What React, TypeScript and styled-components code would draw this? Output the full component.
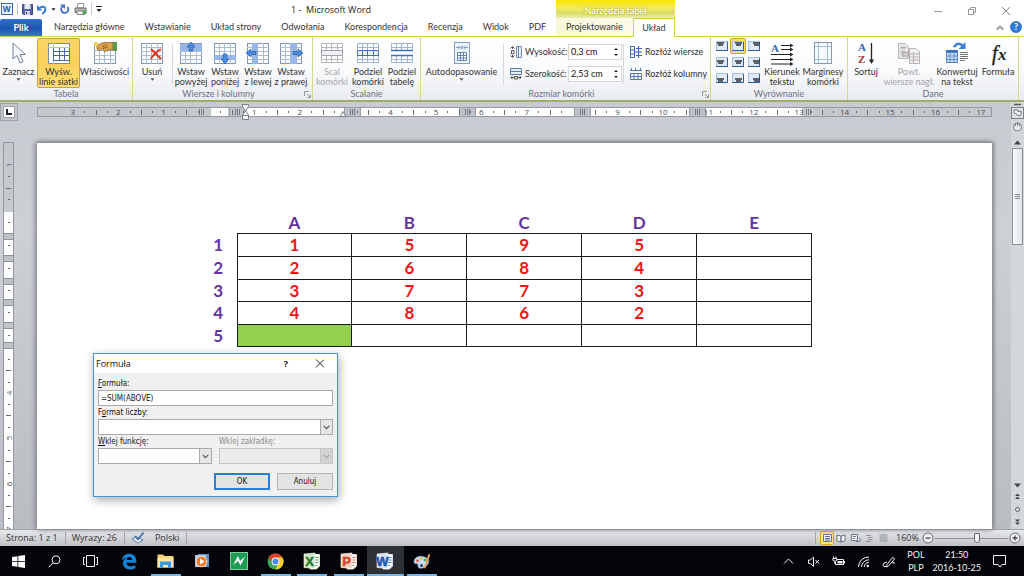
import React from "react";
import styled, { createGlobalStyle, css } from "styled-components";

const GlobalStyle = createGlobalStyle`
  * { box-sizing: border-box; }
  body { margin: 0; font-family: Lato, "Open Sans", sans-serif; font-size: 9px; line-height: 10px; color: #333; }
  button, input, select { font: inherit; color: inherit; margin: 0; padding: 0; border: 0; background: none; border-radius: 0; }
  svg { display: block; flex: none; }
`;

/* ---------- Shell ---------- */
const Shell = styled.div`
  min-height: 100vh;
  display: flex;
  flex-direction: column;
  background: #fff;
  overflow: hidden;
`;

const Header = styled.header`
  display: grid;
  grid-template-columns: 556px 119px 1fr;
  grid-template-rows: 18px 18px;
`;

const QuickBar = styled.div`
  display: flex;
  align-items: center;
`;

const QuickTools = styled.div`
  display: flex;
  align-items: center;
  width: 106px;
  height: 18px;
  gap: 4px;
  padding-left: 1px;
`;

const IconButton = styled.button`
  display: flex;
  align-items: center;
  justify-content: center;
`;

const QuickRule = styled.span`
  width: 1px;
  height: 12px;
  background: #c8c8c8;
`;

const WindowTitle = styled.h1`
  flex: 1;
  margin: 0;
  padding-top: 1px;
  font-family: "Open Sans", sans-serif;
  font-size: 9px;
  font-weight: 400;
  text-align: center;
  white-space: pre;
  color: #222;
`;

const ContextTitle = styled.div`
  display: flex;
  align-items: center;
  justify-content: center;
  padding-top: 4px;
  font-weight: 700;
  color: #fffef0;
  text-shadow: 0 0 2px #8a7d10;
  background: linear-gradient(#f9e600, #f3e95a 45%, #dbdc6f 75%, #ecedb0);
`;

const WindowControls = styled.div`
  display: flex;
  justify-content: flex-end;
  align-items: center;
  gap: 26px;
  padding: 4px 14px 0 0;
`;

const HelpTools = styled.div`
  display: flex;
  justify-content: flex-end;
  align-items: center;
  gap: 6px;
  padding-right: 2px;
`;

const TabList = styled.nav<{ $context?: boolean }>`
  display: flex;
  ${(p) =>
    p.$context &&
    css`
      background: linear-gradient(90deg, #f7f8d8, #fdfdf2);
    `}
`;

const Tab = styled.button<{ $kind?: "file" | "active" }>`
  padding: 0 10px;
  white-space: nowrap;
  ${(p) =>
    p.$kind === "file" &&
    css`
      flex: none;
      width: 42px;
      margin: 1px 2px 0 0;
      padding: 0;
      color: #fff;
      font-weight: 700;
      border-radius: 2px 2px 0 0;
      background: linear-gradient(#2f6fca, #1d55ad 55%, #3577d2);
    `}
  ${(p) =>
    p.$kind === "active" &&
    css`
      flex: 1;
      padding: 0;
      margin-bottom: -1px;
      z-index: 1;
      border: 1px solid #d0d24e;
      border-bottom: 0;
      background: #fff;
    `}
`;

/* ---------- Ribbon ---------- */
const Ribbon = styled.section`
  display: flex;
  height: 66px;
  border-top: 1px solid #d0d24e;
  border-bottom: 2px solid #a2ad68;
  background: linear-gradient(#fff, #fafbfc 50%, #e8ebef);
`;

const GroupBox = styled.div<{ $width: number }>`
  display: flex;
  flex-direction: column;
  width: ${(p) => p.$width}px;
  border-right: 1px solid #d6d88a;
`;

const GroupBody = styled.div`
  display: flex;
  height: 51px;
  padding-top: 1px;
`;

const GroupFooter = styled.div`
  display: flex;
  align-items: center;
  height: 12px;
  color: #6c7384;
`;

const GroupName = styled.span`
  flex: 1;
  text-align: center;
`;

const Tool = styled.button<{ $width: number; $on?: boolean; $dim?: boolean }>`
  display: flex;
  flex-direction: column;
  align-items: center;
  width: ${(p) => p.$width}px;
  padding-top: 3px;
  border: 1px solid transparent;
  border-radius: 2px;
  white-space: nowrap;
  ${(p) =>
    p.$dim &&
    css`
      color: #a5a7ab;
    `}
  ${(p) =>
    p.$on &&
    css`
      border-color: #c9a13c;
      background: linear-gradient(#fbd567, #fbd05c 50%, #ffe071);
    `}
`;

const ToolIcon = styled.span`
  display: flex;
  height: 22px;
  margin-bottom: 3px;
`;

const ToolLine = styled.span`
  display: flex;
  justify-content: center;
  height: 10px;
`;

const ToolRule = styled.span`
  width: 1px;
  height: 40px;
  margin: 6px 1px 0;
  background: #d4d7db;
`;

const FieldStack = styled.div`
  display: flex;
  flex-direction: column;
  gap: 6px;
  padding: 6px 0 0 5px;
`;

const SizeField = styled.label`
  display: flex;
  align-items: center;
  height: 16px;
`;

const SizeLabel = styled.span`
  width: 43px;
  margin-left: 3px;
  white-space: nowrap;
`;

const SizeBox = styled.span`
  display: flex;
  align-items: center;
  width: 54px;
  height: 16px;
  padding-right: 4px;
  border: 1px solid #d5d8dd;
  background: #fff;
`;

const SizeInput = styled.input`
  width: 44px;
  padding-left: 2px;
  color: #111;
`;

const RowTool = styled.button`
  display: flex;
  align-items: center;
  gap: 3px;
  height: 16px;
  white-space: nowrap;
`;

const AlignGrid = styled.div`
  display: grid;
  grid-template-columns: repeat(3, 16px);
  grid-auto-rows: 16px;
  padding-left: 3px;
`;

const AlignButton = styled.button<{ $on?: boolean }>`
  display: flex;
  align-items: center;
  justify-content: center;
  border: 1px solid ${(p) => (p.$on ? "#d0a52c" : "transparent")};
  border-radius: 2px;
  background: ${(p) => (p.$on ? "#fbdc6c" : "none")};
`;

/* ---------- Workspace ---------- */
const Workspace = styled.main`
  flex: 1;
  display: grid;
  grid-template-columns: 37px 1fr 19px 13px;
  grid-template-rows: 40px 1fr;
  background: linear-gradient(#c7cad0, #cdd0d5 30%, #b9bcc1);
`;

const Corner = styled.div`
  padding-top: 1px;
`;

const TabStop = styled.button`
  display: flex;
  align-items: center;
  justify-content: center;
  width: 18px;
  height: 18px;
  border: 1px solid #9b9ea5;
  background: #c3c6cc;
`;

const TabStopMark = styled.span`
  display: flex;
  align-items: center;
  justify-content: center;
  width: 12px;
  height: 12px;
  border: 1px solid #9b9ea5;
  background: #fff;
`;

const RulerTrack = styled.div`
  padding-top: 1px;
  overflow: hidden;
`;

const SideTrack = styled.div`
  position: relative;
  overflow: hidden;
`;

const SideRuler = styled.div`
  position: absolute;
  inset: 0 auto auto 3px;
`;

const Page = styled.article`
  position: relative;
  padding: 70px 180px 0 163px;
  background: #fff;
  border-top: 1px solid #8d9096;
  box-shadow: -2px 0 5px #85888e, 2px 0 4px #85888e;
`;

const Sheet = styled.table`
  width: 100%;
  height: 134px;
  table-layout: fixed;
  border-collapse: collapse;
  font-size: 17px;
  font-weight: 700;
  line-height: 20px;
  text-align: center;
  color: #f01414;
`;

const HeadCell = styled.th<{ $row?: boolean }>`
  width: ${(p) => (p.$row ? "37px" : "auto")};
  padding: 0;
  font-weight: 700;
  color: #6433a0;
`;

const Cell = styled.td<{ $fill?: boolean }>`
  padding: 0;
  border: 1px solid #1c1c1c;
  background: ${(p) => (p.$fill ? "#92d050" : "none")};
`;

const ScrollColumn = styled.div`
  grid-column: 4;
  grid-row: 1 / 3;
  display: flex;
  flex-direction: column;
  align-items: center;
  gap: 3px;
  padding-top: 1px;
  background: #d3d6da;
`;

const ScrollThumb = styled.button`
  display: flex;
  align-items: center;
  justify-content: center;
  width: 11px;
  height: 97px;
  border: 1px solid #8c929c;
  background: linear-gradient(90deg, #fbfcfd, #dfe3e8);
`;

const ScrollGap = styled.div`
  flex: 1;
`;

/* ---------- Dialog ---------- */
const Dialog = styled.form`
  position: absolute;
  top: 210px;
  left: 56px;
  width: 245px;
  border: 1px solid #4c92cc;
  background: #f0f0f0;
  box-shadow: 1px 3px 9px rgba(0, 0, 0, 0.35);
  font-family: "DejaVu Sans Condensed", "DejaVu Sans", sans-serif;
  font-size: 8px;
  color: #111;
`;

const DialogBar = styled.header`
  display: flex;
  align-items: center;
  height: 19px;
  padding: 0 13px 0 2px;
  background: #fff;
  font-family: "Open Sans", sans-serif;
  font-size: 9px;
`;

const DialogName = styled.h2`
  flex: 1;
  margin: 0;
  font-size: 9px;
  font-weight: 400;
`;

const DialogBody = styled.div`
  display: flex;
  flex-direction: column;
  padding: 5px 4px 6px;
`;

const Field = styled.label<{ $dim?: boolean }>`
  display: flex;
  flex-direction: column;
  color: ${(p) => (p.$dim ? "#8a8a8a" : "inherit")};
`;

const FieldPair = styled.div`
  display: grid;
  grid-template-columns: 114px 114px;
  justify-content: space-between;
`;

const FieldCaption = styled.span`
  line-height: 12px;
`;

const TextInput = styled.input`
  height: 16px;
  margin-bottom: 1px;
  padding: 0 2px;
  border: 1px solid #a9a9a9;
  background: #fff;
`;

const SelectBox = styled.span<{ $dim?: boolean }>`
  display: flex;
  height: 16px;
  margin-bottom: 1px;
  border: 1px solid ${(p) => (p.$dim ? "#c6c6c6" : "#a9a9a9")};
  background: ${(p) => (p.$dim ? "#ebebeb" : "#fff")};
`;

const SelectInput = styled.select`
  flex: 1;
  min-width: 0;
  appearance: none;
`;

const SelectArrow = styled.span<{ $dim?: boolean }>`
  display: flex;
  align-items: center;
  justify-content: center;
  width: 12px;
  border-left: 1px solid ${(p) => (p.$dim ? "#c6c6c6" : "#a9a9a9")};
  background: ${(p) => (p.$dim ? "#d2d2d2" : "#e6e6e6")};
`;

const DialogActions = styled.div`
  display: flex;
  justify-content: flex-end;
  gap: 7px;
  padding-top: 8px;
`;

const DialogButton = styled.button<{ $primary?: boolean }>`
  width: 56px;
  height: 17px;
  border: ${(p) => (p.$primary ? "2px solid #2a7fd0" : "1px solid #b5b5b5")};
  background: #e3e3e3;
`;

/* ---------- Status bar ---------- */
const StatusBar = styled.footer`
  display: flex;
  align-items: center;
  height: 17px;
  font-family: "Open Sans", sans-serif;
  border-top: 1px solid #9fa2a7;
  background: linear-gradient(#e6e8ea, #cfd1d4 60%, #bfc1c4);
`;

const StatusItem = styled.span`
  display: flex;
  align-items: center;
  height: 12px;
  padding: 0 7px 0 6px;
  border-right: 1px solid #a3a6aa;
`;

const StatusGap = styled.span`
  flex: 1;
  height: 12px;
  margin-right: 4px;
  border-right: 1px solid #a3a6aa;
`;

const ViewButton = styled.button<{ $on?: boolean }>`
  display: flex;
  align-items: center;
  justify-content: center;
  width: 14px;
  height: 14px;
  border: 1px solid ${(p) => (p.$on ? "#d9a520" : "transparent")};
  border-radius: 2px;
  background: ${(p) => (p.$on ? "#fce48a" : "none")};
`;

const Zoom = styled.div`
  display: flex;
  align-items: center;
  padding: 0 3px 0 6px;
`;

const ZoomValue = styled.span`
  width: 26px;
`;

const ZoomRange = styled.input`
  appearance: none;
  width: 73px;
  height: 12px;
  margin: 0 1px;
  background: linear-gradient(#8e9196, #8e9196) center / 100% 1px no-repeat;
  &::-webkit-slider-thumb {
    appearance: none;
    width: 6px;
    height: 10px;
    border: 1px solid #63676d;
    border-radius: 1px 1px 3px 3px;
    background: #f4f5f6;
  }
`;

/* ---------- Taskbar ---------- */
const Taskbar = styled.footer`
  display: flex;
  height: 30px;
  background: #03050a;
  color: #f2f2f2;
`;

const TaskItem = styled.button<{ $running?: boolean; $on?: boolean }>`
  display: flex;
  flex-direction: column;
  align-items: center;
  justify-content: center;
  width: 36px;
  background: ${(p) => (p.$on ? "#2e3237" : "none")};
  ${(p) =>
    p.$running &&
    css`
      background-image: linear-gradient(#78b4e6, #78b4e6);
      background-size: ${p.$on ? "100%" : "30px"} 2px;
      background-position: bottom center;
      background-repeat: no-repeat;
    `}
`;

const TaskApps = styled.div`
  display: flex;
  width: 329px;
  margin-left: 3px;
  & > button { flex: 1; }
`;

const Tray = styled.div`
  display: flex;
  flex: 1;
  justify-content: flex-end;
  align-items: center;
  gap: 12px;
  padding-right: 18px;
`;

const TrayClock = styled.div`
  display: flex;
  gap: 8px;
`;

const TrayText = styled.div`
  font-size: 9px;
  line-height: 13px;
  text-align: center;
  white-space: nowrap;
`;

/* ---------- Icons ---------- */
const range = (n: number) => Array.from({ length: n }, (_, i) => i);

type GridProps = { line?: string; edge?: string; children?: React.ReactNode; under?: React.ReactNode };
const GridIcon = ({ line = "#a9bcda", edge = "#8294b3", children, under }: GridProps) => (
  <svg width="24" height="22" viewBox="0 0 24 22">
    <rect x="1.5" y="1.5" width="21" height="20" fill="#fff" stroke={edge} />
    {under}
    <path d="M1 5.5H23M1 9.5H23M1 13.5H23M1 17.5H23M6.5 1V22M11.5 1V22M17.5 1V22" stroke={line} fill="none" />
    {children}
  </svg>
);

const CursorIcon = () => (
  <svg width="16" height="22" viewBox="0 0 16 22">
    <path d="M2 1V17L6 13.5L9 21L12 19.8L9 12.5H14.5Z" fill="#f6f8fb" stroke="#6e7f9e" />
  </svg>
);

const ViewGridIcon = () => (
  <svg width="24" height="22" viewBox="0 0 24 22">
    <rect x="1.5" y="1.5" width="21" height="20" fill="#fff" stroke="#7d8ba8" />
    <path d="M1 5.5H23M6.5 1V22" stroke="#b4c3dc" />
    <path d="M6.5 6V19M12.5 6V19M17.5 6V19M22.5 6V19M6 9.5H23M6 13.5H23M6 18.5H23" stroke="#4a69a5" />
  </svg>
);

const PropsIcon = () => (
  <svg width="24" height="22" viewBox="0 0 24 22">
    <rect x="1.5" y="3.5" width="21" height="18" fill="#fff" stroke="#8294b3" />
    <path d="M1 8.5H23M1 13.5H23M1 17.5H23M6.5 8V22M11.5 8V22M17.5 8V22" stroke="#a9bcda" />
    <path d="M4 4Q8 0 13 0.5L20 0V8L16 8L12 9.5Q9 9 11 6L6 8.5L4 7Z" fill="#d9a24a" stroke="#7b5524" strokeWidth=".7" />
    <path d="M9 4L14 3M10 6L15 5" stroke="#7b5524" strokeWidth=".7" />
    <rect x="20" y="0" width="4" height="9" fill="#5b9a4e" />
    <rect x="1" y="0" width="4" height="4" fill="#f1cf5b" />
  </svg>
);

const DeleteIcon = () => (
  <GridIcon>
    <path d="M11 7L21 17M21 7Q14 11 11 17" stroke="#e2331d" strokeWidth="2" fill="none" />
  </GridIcon>
);

const arrows = {
  up: "M12 0L16 5H13.8V9H10.2V5H8Z",
  down: "M12 22L16 17H13.8V12H10.2V17H8Z",
  left: "M0 11L5 7V9.5H10V12.5H5V15Z",
  right: "M24 11L19 7V9.5H14V12.5H19V15Z",
};
const bands = {
  up: "M1 2H23V9H1Z",
  down: "M1 13H23V18H1Z",
  left: "M6 1H12V22H6Z",
  right: "M12 1H18V22H12Z",
};
const InsertIcon = ({ dir }: { dir: keyof typeof arrows }) => (
  <GridIcon under={<path d={bands[dir]} fill="#a9c5f0" />}>
    <path d={bands[dir]} fill="#7ba5e5" opacity=".4" />
    <path d={arrows[dir]} fill="#4c8be0" stroke="#2a5ba6" strokeWidth=".7" />
  </GridIcon>
);

const SplitIcon = ({ kind }: { kind: "merge" | "cells" | "table" }) => {
  const tone = kind === "merge" ? "#b9b5b8" : "#9fb3d4";
  const bold = kind === "merge" ? "#a5a0a4" : "#3c6fc0";
  return (
    <svg width="24" height="22" viewBox="0 0 24 22">
      <path d="M1.5 1.5H22.5V8.5H1.5ZM1.5 13.5H22.5V20.5H1.5ZM1 5.5H23M1 17.5H23M6.5 1V9M11.5 1V9M17.5 1V9M6.5 13V21M11.5 13V21M17.5 13V21" fill="#fff" stroke={tone} />
      {kind === "table" ? (
        <path d="M1 8.5H23M1 13.5H23" stroke={bold} strokeWidth="1.5" />
      ) : (
        <path d="M1.5 8.5H22.5V13.5H1.5Z" fill="#eef1f7" stroke={bold} />
      )}
      {kind === "cells" && <path d="M6.5 8V14M11.5 8V14M17.5 8V14" stroke={bold} />}
    </svg>
  );
};

const AutoFitIcon = () => (
  <svg width="18" height="22" viewBox="0 0 18 22">
    <rect x="1.5" y=".5" width="15" height="21" fill="#f0f5fc" stroke="#7f9cc8" />
    <path d="M3 5.5H7L5 3.5M7 5.5L5 7.5M15 5.5H11L13 3.5M11 5.5L13 7.5M8 4L10 7M10 4L8 7" fill="none" stroke="#6488c2" strokeWidth=".8" />
    <path d="M4.5 10.5H13.5V18.5H4.5ZM4 13.5H14M4 16H14M7.5 10V19M10.5 10V19" fill="#fff" stroke="#5679b4" strokeWidth=".9" />
  </svg>
);

const HeightIcon = () => (
  <svg width="12" height="12" viewBox="0 0 12 12">
    <path d="M2.5 1V3M2.5 9V11M.5 2.5L2.5 .5L4.5 2.5M.5 9.5L2.5 11.5L4.5 9.5M1.5 4.5H4V8H1.5Z" fill="none" stroke="#444" strokeWidth=".9" />
    <path d="M6.5 .5H11.5V11.5H6.5ZM8.5 .5V11.5" fill="#e6eefa" stroke="#7189b3" />
  </svg>
);
const WidthIcon = () => (
  <svg width="12" height="12" viewBox="0 0 12 12">
    <path d="M.5 .5H11.5V6.5H.5ZM0 3.5H12" fill="#e6eefa" stroke="#5e7cb0" />
    <path d="M1 9.5H4M8 9.5H11M2.5 8L.7 9.5L2.5 11M9.5 8L11.3 9.5L9.5 11M4.5 8.5H7.5V11H4.5Z" fill="none" stroke="#444" strokeWidth=".9" />
  </svg>
);
const RowsIcon = () => (
  <svg width="12" height="12" viewBox="0 0 12 12">
    <path d="M.5 .5H4.5V11.5H.5ZM0 4H5M0 8H5M8.5 0V12M6 2.5H12M5 6H12M6 9.5H12" fill="none" stroke="#3f65ac" />
  </svg>
);
const ColumnsIcon = () => (
  <svg width="12" height="12" viewBox="0 0 12 12">
    <path d="M1.5 0V3M5.5 0V3M10.5 0V3M0 2.5H12M.5 5.5H11.5V11.5H.5ZM4 5V12M8 5V12M0 8.5H12" fill="none" stroke="#5a79b2" />
  </svg>
);

const AlignIcon = ({ col, row }: { col: number; row: number }) => (
  <svg width="12" height="10" viewBox="0 0 12 10">
    <rect x=".5" y=".5" width="11" height="9" fill="#dfe9f7" stroke="#a6bedf" />
    <path d="M0 9.5H11.5V1" fill="none" stroke="#2f5da6" />
    <g transform={`translate(${col * 2 + 1} ${row * 2})`}>
      <path d="M0 2H7M1 4H6" stroke="#30343c" strokeWidth="1.3" />
    </g>
  </svg>
);

const TextDirIcon = () => (
  <svg width="24" height="24" viewBox="0 0 24 24">
    <text x="1" y="10" fontFamily="Liberation Serif" fontWeight="700" fontSize="11" fill="#3867b5">A</text>
    <path d="M11 3.5H20M11 7.5H20M1 12.5H20M1 17.5H20M1 22H20" stroke="#222" />
    <path d="M20 1.5L23.5 3.5L20 5.5ZM20 5.5L23.5 7.5L20 9.5ZM20 10.5L23.5 12.5L20 14.5ZM20 15.5L23.5 17.5L20 19.5ZM20 20L23.5 22L20 24Z" fill="#222" />
  </svg>
);
const MarginsIcon = () => (
  <svg width="20" height="22" viewBox="0 0 20 22">
    <rect x="1.5" y=".5" width="17" height="21" fill="#f6fafd" stroke="#8a97a9" />
    <path d="M5.5 1V21M14.5 1V21M2 4.5H18M2 17.5H18" stroke="#9cc0dd" />
  </svg>
);
const SortIcon = () => (
  <svg width="18" height="24" viewBox="0 0 18 24">
    <text x="1" y="9" fontFamily="Liberation Serif" fontWeight="700" fontSize="11" fill="#3263b5">A</text>
    <text x="1" y="21" fontFamily="Liberation Serif" fontWeight="700" fontSize="11" fill="#a83232">Z</text>
    <path d="M14.5 1V20" stroke="#222" strokeWidth="1.3" />
    <path d="M12 17.5L14.5 22L17 17.5Z" fill="#222" />
  </svg>
);
const RepeatIcon = () => (
  <svg width="24" height="22" viewBox="0 0 24 22">
    <path d="M1.5 1.5H8L11.5 5V16.5H1.5ZM3 6H8M3 9H8M3 12H8" fill="#eceaec" stroke="#b8b4b8" />
    <path d="M12.5 6.5H19L22.5 10V21.5H12.5ZM12.5 12H22M12.5 15H22M12.5 18H22M16.5 10V21" fill="#f2f0f2" stroke="#b8b4b8" />
    <path d="M4 5.5H9M5.5 10.5H11V14H5.5Z" fill="none" stroke="#b0acb0" strokeWidth="1.5" />
  </svg>
);
const ConvertIcon = () => (
  <svg width="24" height="22" viewBox="0 0 24 22">
    <path d="M9 5Q13 -1 18 4" fill="none" stroke="#3b7fdd" strokeWidth="2.5" />
    <path d="M20.5 0V7H13.5Z" fill="#3b7fdd" />
    <path d="M1.5 8.5H12.5V20.5H1.5Z" fill="#c5daf6" stroke="#5683cb" />
    <path d="M1.5 9.5H12.5" stroke="#3368bb" strokeWidth="2.5" />
    <path d="M1 14H13M1 17.5H13M5 9V20M9 9V20" stroke="#5683cb" strokeWidth=".8" />
    <path d="M15 10.5H23M15 12.5H23M15 14.5H23M15 16.5H23M15 18.5H20" stroke="#555" strokeWidth=".8" />
  </svg>
);
const FxIcon = () => (
  <svg width="22" height="24" viewBox="0 0 22 24">
    <text x="5" y="18" fontFamily="Liberation Serif" fontStyle="italic" fontSize="20" fill="#222" stroke="#222" strokeWidth=".4">f</text>
    <text x="11" y="18" fontFamily="Liberation Serif" fontStyle="italic" fontWeight="700" fontSize="17" fill="#222">x</text>
  </svg>
);

const Caret = ({ size = 5, color = "#555" }: { size?: number; color?: string }) => (
  <svg width={size} height={size} viewBox="0 0 6 6">
    <path d="M.5 1.5H5.5L3 4.5Z" fill={color} />
  </svg>
);
const Launcher = () => (
  <svg width="8" height="7" viewBox="0 0 8 7">
    <path d="M.5 5V.5H5M3 3L6 6M6.5 3.5V6.5H3.5" fill="none" stroke="#888d97" strokeWidth=".9" />
  </svg>
);
const Spinner = () => (
  <svg width="6" height="10" viewBox="0 0 6 10">
    <path d="M1 3L3 1L5 3ZM1 7L3 9L5 7Z" fill="#222" />
  </svg>
);
const Chevron = ({ color = "#555" }: { color?: string }) => (
  <svg width="7" height="5" viewBox="0 0 7 5">
    <path d="M.7 .8L3.5 3.7L6.3 .8" fill="none" stroke={color} strokeWidth="1.1" />
  </svg>
);

const WordMark = ({ size }: { size: number }) => (
  <svg width={size} height={size} viewBox="0 0 13 13">
    <rect x=".5" y=".5" width="12" height="12" fill="#fff" stroke="#2b5fae" />
    <rect x="1.5" y="1.5" width="9" height="10" fill="#e5eefb" />
    <text x="2" y="10" fontFamily="Liberation Sans" fontWeight="700" fontSize="9" fill="#2357a8">W</text>
  </svg>
);
const SaveIcon = () => (
  <svg width="11" height="11" viewBox="0 0 11 11">
    <path d="M.5 .5H10.5V10.5H1.5L.5 9.5Z" fill="#5a61ae" stroke="#3c4388" />
    <rect x="2.5" y="0" width="6" height="5" fill="#e9ecf7" />
    <rect x="3" y="7" width="5" height="4" fill="#cdd1e6" />
    <rect x="4" y="8" width="1" height="2" fill="#333a7c" />
  </svg>
);
const UndoIcon = () => (
  <svg width="10" height="11" viewBox="0 0 10 11">
    <path d="M2 4Q8 1 8.5 5Q8.5 8 5 10" fill="none" stroke="#3d7bcc" strokeWidth="1.9" />
    <path d="M0 1V6.5H5.5Z" fill="#3d7bcc" />
  </svg>
);
const RedoIcon = () => (
  <svg width="10" height="11" viewBox="0 0 10 11">
    <path d="M2.5 2.5A3.6 3.6 0 1 0 7.5 3" fill="none" stroke="#3d6fd0" strokeWidth="1.8" />
    <path d="M0 .5H5V5Z" fill="#3d6fd0" />
  </svg>
);
const PrintIcon = () => (
  <svg width="13" height="12" viewBox="0 0 13 12">
    <path d="M4 .5H10L9 5H3Z" fill="#fff" stroke="#777" strokeWidth=".8" />
    <path d="M1 5H12V9.5H1Z" fill="#b3b8b3" stroke="#555" strokeWidth=".8" />
    <path d="M3 8H10V11.5H3Z" fill="#f4f4f4" stroke="#666" strokeWidth=".8" />
    <circle cx="10.5" cy="9.5" r="2" fill="#4f9c4c" />
  </svg>
);

/* ---------- Rulers ---------- */
const CM = 45.4;
const tickKinds = range(4).slice(1);

const HorizontalRuler = () => {
  const zero = 172;
  return (
    <svg width="955" height="17">
      <rect x=".5" y="4.5" width="954" height="9" fill="#c5c8cd" stroke="#93979f" />
      <rect x="174" y="5" width="17" height="8" fill="#fff" />
      <rect x="209" y="5" width="556" height="8" fill="#fff" />
      {[192, 307, 422, 537, 652].map((x) => (
        <rect key={x} x={x + 0.5} y="4.5" width="16" height="9" fill="#bfc2c8" stroke="#9a9da5" />
      ))}
      {[162, 198, 313, 428, 543, 658, 769].map((x) => (
        <path key={x} d={`M${x + 0.5} 6V12M${x + 2.5} 6V12M${x + 4.5} 6V12`} stroke="#777b82" />
      ))}
      {range(21).map((i) => {
        const cm = i - 3;
        const x = zero + cm * CM;
        return (
          <g key={cm}>
            {cm !== 0 && cm !== 3 && cm !== 8 && (
              <text x={x} y="12" textAnchor="middle" fontFamily="Open Sans" fontSize="8" fill="#4a4d52">
                {Math.abs(cm)}
              </text>
            )}
            {cm < 17 &&
              tickKinds.map((q) => {
                const tx = Math.round(x + (q * CM) / 4);
                return <rect key={q} x={tx} y={q === 2 ? 7 : 8} width="1" height={q === 2 ? 5 : 2} fill="#6a6d73" />;
              })}
          </g>
        );
      })}
      <path d="M205 1.5H211.5V3.5L208.5 8L211.5 12V16.5H205.5V12L208.5 8L205.5 3.5V1.5M205.5 12.5H211.5" fill="#f3f4f5" stroke="#73777e" strokeWidth=".9" />
      <path d="M303 13.5L306 8.5L309 13.5Z" fill="#f3f4f5" stroke="#73777e" strokeWidth=".9" />
    </svg>
  );
};

const VerticalRuler = () => (
  <svg width="12" height="400">
    <rect x=".5" y=".5" width="10" height="399" fill="#fff" stroke="#93979f" />
    <rect x="1" y="1" width="9" height="69" fill="#c5c8cd" />
    {[91, 113, 136, 157, 180, 200].map((y) => (
      <rect key={y} x=".5" y={y + 0.5} width="10" height="6" fill="#bfc2c8" stroke="#8f939a" />
    ))}
    {[
      [1, 23],
      [4, 251],
      [5, 296],
      [6, 342],
      [7, 387],
    ].map(([n, y]) => (
      <text key={n} x={-y} y="9" transform="rotate(-90)" textAnchor="middle" fontFamily="Open Sans" fontSize="8" fill="#4a4d52">
        {n}
      </text>
    ))}
    {[39, 62, 85, 108, 131, 153, 175, 198, 222, 245, 267, 290, 313, 336, 358, 381].map((y) => (
      <rect key={y} x="5" y={y - 5} width="2" height="1" fill="#6a6d73" />
    ))}
    {[46, 228, 273, 319, 364].map((y) => (
      <rect key={y} x="3" y={y} width="5" height="1" fill="#6a6d73" />
    ))}
  </svg>
);

/* ---------- Taskbar icons ---------- */
const OfficeIcon = ({ letter, color, tint }: { letter: string; color: string; tint: string }) => (
  <svg width="18" height="18" viewBox="0 0 18 18">
    <path d="M7 2.5H16.5V14L13.5 17H7Z" fill="#fff" stroke={tint} />
    <path d="M12 5.5H15.5M12 8H15.5M12 10.5H15.5M9 13.5H14" stroke={color} strokeWidth=".8" />
    <path d="M1 2L12 1V16.5L1 15.5Z" fill={tint} stroke="#fff" strokeWidth=".6" />
    <text x="6.5" y="13.5" textAnchor="middle" fontFamily="Liberation Sans" fontWeight="700" fontSize="13" fill={color} stroke={color} strokeWidth=".5">
      {letter}
    </text>
  </svg>
);

type App = { name: string; icon: React.ReactNode; running?: boolean; on?: boolean };
const apps: App[] = [
  {
    name: "Edge",
    icon: (
      <svg width="16" height="17" viewBox="0 0 16 17">
        <path d="M.8 7.5C1.5 2.8 4.5 .8 8.2 .8C13 .8 15.3 4 15.3 8V9.8H5.3C5.4 12.3 7.5 13.3 9.8 13.3C11.5 13.3 13 12.9 14.3 12.1V15.3C12.8 16.1 11 16.5 9 16.5C4.8 16.5 2 14 2 10.3C2 8 3.3 5.8 5.5 4.7C3.5 4.9 1.9 6 .8 7.5ZM5.4 7H11C11 5 10.2 3.9 8.4 3.9C6.8 3.9 5.7 5.1 5.4 7Z" fill="#1583dc" />
      </svg>
    ),
  },
  {
    name: "Eksplorator plików",
    running: true,
    icon: (
      <svg width="17" height="16" viewBox="0 0 17 16">
        <path d="M.5 1.5H6L7.5 3H16.5V14.5H.5Z" fill="#f3d373" />
        <path d="M.5 5H16.5V14.5H.5Z" fill="#fbe7a0" />
        <path d="M3 8.5H14V15H11V12H6V15H3Z" fill="#3a9bd8" />
      </svg>
    ),
  },
  {
    name: "Odtwarzacz",
    icon: (
      <svg width="16" height="16" viewBox="0 0 16 16">
        <rect x="4" y="1" width="11" height="13" fill="#5b93c8" />
        <rect x="1" y="2" width="11" height="12" fill="#a9cbe8" />
        <circle cx="7.5" cy="8.5" r="5.3" fill="#ee7a23" stroke="#fbe0c8" />
        <path d="M6 5.5L10.5 8.5L6 11.5Z" fill="#fff" />
      </svg>
    ),
  },
  {
    name: "Monitor",
    icon: (
      <svg width="18" height="18" viewBox="0 0 18 18">
        <rect x=".5" y=".5" width="17" height="17" fill="#1c9c52" stroke="#7ecb9c" />
        <path d="M3 13L8 4L10 9L15 4.5L10.5 13.5L8 9Z" fill="#fff" />
      </svg>
    ),
  },
  {
    name: "Chrome",
    running: true,
    icon: (
      <svg width="17" height="17" viewBox="0 0 17 17">
        <circle cx="8.5" cy="8.5" r="8" fill="#3aa757" />
        <path d="M1.57 4.5A8 8 0 0 1 15.43 4.5L8.5 8.5L5.5 10.5Z" fill="#e2402f" />
        <path d="M15.43 4.5A8 8 0 0 1 8.5 16.5L11.5 10.5L8.5 4.5Z" fill="#fccb2f" />
        <circle cx="8.5" cy="8.5" r="3.9" fill="#fff" />
        <circle cx="8.5" cy="8.5" r="3" fill="#4687ee" />
      </svg>
    ),
  },
  { name: "Excel", running: true, icon: <OfficeIcon letter="X" color="#2c7a34" tint="#cfe8c8" /> },
  { name: "PowerPoint", running: true, icon: <OfficeIcon letter="P" color="#d24a22" tint="#f9d3c3" /> },
  { name: "Word", running: true, on: true, icon: <OfficeIcon letter="W" color="#2256aa" tint="#d3e2f6" /> },
  {
    name: "Paint",
    running: true,
    icon: (
      <svg width="18" height="18" viewBox="0 0 18 18">
        <path d="M1 10C1 5 6 3.5 10 4.5C15 5.5 17 9 15 12C13 15.5 9 17 6 16C4 15 6 13 4.5 12C3 11.5 1 12 1 10Z" fill="#c8dcee" stroke="#7798b8" strokeWidth=".7" />
        <circle cx="4.5" cy="8.8" r="1.3" fill="#e04a35" />
        <circle cx="8" cy="6.8" r="1.3" fill="#f0c332" />
        <circle cx="12" cy="8" r="1.3" fill="#49a64a" />
        <circle cx="8.5" cy="13.5" r="1.5" fill="#223a78" />
        <path d="M11 16L15 3Q17 0 17 4L12.5 16.5Z" fill="#d99b52" />
      </svg>
    ),
  },
];

const stroke = { fill: "none", stroke: "#f2f2f2", strokeWidth: 1 };
const trayIcons: [string, React.ReactNode][] = [
  ["Pokaż ukryte ikony", <path d="M2 8.5L6.5 4L11 8.5" {...stroke} />],
  [
    "Głośność",
    <>
      <path d="M1.5 5V8.5H3.5L6.5 11.5V2L3.5 5Z" {...stroke} />
      <path d="M8.5 5L12 8.5M12 5L8.5 8.5" {...stroke} />
    </>,
  ],
  [
    "Bateria",
    <>
      <path d="M5 4.5H11.5V9.5H3.5V7" {...stroke} />
      <path d="M5.5 6H10.5V8.5H5.5Z" fill="#f2f2f2" />
      <path d="M12.5 6V8.5M1.5 1.5V3.5M4 1.5V3.5M.8 3.5H4.8V5.5Q3 7 1 5.5ZM2.8 6V9" {...stroke} />
    </>,
  ],
  [
    "Sieć",
    <>
      <path d="M1.5 12A10 10 0 0 1 12 2M4.5 12A7.5 7.5 0 0 1 12 4.8M7.2 12A5 5 0 0 1 12 7.5" {...stroke} />
      <circle cx="10.8" cy="11" r="1.2" fill="#f2f2f2" />
    </>,
  ],
  [
    "Obszar roboczy pisma",
    <path d="M12.5 4L10 7L6 11.5L4.5 11.8L4.8 10L9.5 3.5Q11.5 1 12.5 4M5 7Q1 7.5 1 10Q1.5 12.5 4.5 11.5M10 7Q13 7 12 9" {...stroke} />,
  ],
];

/* ---------- Content ---------- */
const mainTabs = ["Narzędzia główne", "Wstawianie", "Układ strony", "Odwołania", "Korespondencja", "Recenzja", "Widok", "PDF"];
const columns = ["A", "B", "C", "D", "E"];
const rows = [
  ["1", "5", "9", "5", ""],
  ["2", "6", "8", "4", ""],
  ["3", "7", "7", "3", ""],
  ["4", "8", "6", "2", ""],
  ["", "", "", "", ""],
];

type ToolButtonProps = { icon: React.ReactNode; lines: string[]; width: number; on?: boolean; dim?: boolean; menu?: boolean };
const ToolButton = ({ icon, lines, width, on, dim, menu }: ToolButtonProps) => (
  <Tool type="button" $width={width} $on={on} $dim={dim} disabled={dim}>
    <ToolIcon>{icon}</ToolIcon>
    {lines.map((l) => (
      <ToolLine key={l}>{l}</ToolLine>
    ))}
    {menu && (
      <ToolLine>
        <Caret />
      </ToolLine>
    )}
  </Tool>
);

const Group = ({ name, width, launcher, children }: { name: string; width: number; launcher?: boolean; children: React.ReactNode }) => (
  <GroupBox $width={width}>
    <GroupBody>{children}</GroupBody>
    <GroupFooter>
      <GroupName>{name}</GroupName>
      {launcher && (
        <IconButton aria-label={name}>
          <Launcher />
        </IconButton>
      )}
    </GroupFooter>
  </GroupBox>
);

const FormulaDialog = () => (
  <Dialog aria-label="Formuła">
    <DialogBar>
      <DialogName>Formuła</DialogName>
      <IconButton type="button" aria-label="Pomoc">
        <b>?</b>
      </IconButton>
      <IconButton type="button" aria-label="Zamknij">
        <svg width="36" height="9" viewBox="0 0 36 9">
          <path d="M28 .5L36 8.5M36 .5L28 8.5" stroke="#222" />
        </svg>
      </IconButton>
    </DialogBar>
    <DialogBody>
      <Field>
        <FieldCaption>
          <u>F</u>ormuła:
        </FieldCaption>
        <TextInput defaultValue="=SUM(ABOVE)" />
      </Field>
      <Field>
        <FieldCaption>
          F<u>o</u>rmat liczby:
        </FieldCaption>
        <SelectBox>
          <SelectInput />
          <SelectArrow>
            <Chevron />
          </SelectArrow>
        </SelectBox>
      </Field>
      <FieldPair>
        <Field>
          <FieldCaption>
            <u>W</u>klej funkcję:
          </FieldCaption>
          <SelectBox>
            <SelectInput />
            <SelectArrow>
              <Chevron />
            </SelectArrow>
          </SelectBox>
        </Field>
        <Field $dim>
          <FieldCaption>Wklej zakładkę:</FieldCaption>
          <SelectBox $dim>
            <SelectInput disabled />
            <SelectArrow $dim>
              <Chevron color="#a5a5a5" />
            </SelectArrow>
          </SelectBox>
        </Field>
      </FieldPair>
      <DialogActions>
        <DialogButton type="button" $primary>
          OK
        </DialogButton>
        <DialogButton type="button">Anuluj</DialogButton>
      </DialogActions>
    </DialogBody>
  </Dialog>
);

export default function App() {
  return (
    <Shell>
      <GlobalStyle />
      <Header>
        <QuickBar>
          <QuickTools>
            <WordMark size={12} />
            <QuickRule />
            <IconButton aria-label="Zapisz">
              <SaveIcon />
            </IconButton>
            <IconButton aria-label="Cofnij">
              <UndoIcon />
            </IconButton>
            <Caret color="#222" />
            <IconButton aria-label="Ponów">
              <RedoIcon />
            </IconButton>
            <IconButton aria-label="Drukuj">
              <PrintIcon />
            </IconButton>
            <QuickRule />
            <svg width="6" height="8" viewBox="0 0 6 8">
              <path d="M0 1.5H6" stroke="#222" />
              <path d="M.5 4H5.5L3 7Z" fill="#222" />
            </svg>
          </QuickTools>
          <WindowTitle>{"1 -  Microsoft Word"}</WindowTitle>
        </QuickBar>
        <ContextTitle>Narzędzia tabel</ContextTitle>
        <WindowControls>
          <IconButton aria-label="Minimalizuj">
            <svg width="8" height="8">
              <path d="M0 4.5H8" stroke="#999" />
            </svg>
          </IconButton>
          <IconButton aria-label="Przywróć">
            <svg width="8" height="8">
              <path d="M.5 2.5H5.5V7.5H.5ZM2.5 2V.5H7.5V5.5H6" fill="none" stroke="#999" />
            </svg>
          </IconButton>
          <IconButton aria-label="Zamknij">
            <svg width="8" height="8">
              <path d="M0 0L8 8M8 0L0 8" stroke="#888" />
            </svg>
          </IconButton>
        </WindowControls>
        <TabList>
          <Tab $kind="file">Plik</Tab>
          {mainTabs.map((t) => (
            <Tab key={t}>{t}</Tab>
          ))}
        </TabList>
        <TabList $context>
          <Tab>Projektowanie</Tab>
          <Tab $kind="active">Układ</Tab>
        </TabList>
        <HelpTools>
          <IconButton aria-label="Minimalizuj wstążkę">
            <svg width="8" height="6">
              <path d="M1 4.5L4 1.5L7 4.5V5.5L4 3.5L1 5.5Z" fill="#fff" stroke="#555" strokeWidth=".8" />
            </svg>
          </IconButton>
          <IconButton aria-label="Pomoc">
            <svg width="12" height="12" viewBox="0 0 12 12">
              <circle cx="6" cy="6" r="5.6" fill="#2f7ad6" stroke="#1d5bb0" strokeWidth=".6" />
              <text x="6" y="9" textAnchor="middle" fontWeight="700" fontSize="9" fill="#fff">?</text>
            </svg>
          </IconButton>
        </HelpTools>
      </Header>

      <Ribbon>
        <Group name="Tabela" width={133}>
          <ToolButton width={37} icon={<CursorIcon />} lines={["Zaznacz"]} menu />
          <ToolButton width={43} icon={<ViewGridIcon />} lines={["Wyśw.", "linie siatki"]} on />
          <ToolButton width={49} icon={<PropsIcon />} lines={["Właściwości"]} />
        </Group>
        <Group name="Wiersze i kolumny" width={180} launcher>
          <ToolButton width={38} icon={<DeleteIcon />} lines={["Usuń"]} menu />
          <ToolRule />
          <ToolButton width={34} icon={<InsertIcon dir="up" />} lines={["Wstaw", "powyżej"]} />
          <ToolButton width={34} icon={<InsertIcon dir="down" />} lines={["Wstaw", "poniżej"]} />
          <ToolButton width={32} icon={<InsertIcon dir="left" />} lines={["Wstaw", "z lewej"]} />
          <ToolButton width={34} icon={<InsertIcon dir="right" />} lines={["Wstaw", "z prawej"]} />
        </Group>
        <Group name="Scalanie" width={108}>
          <ToolButton width={38} icon={<SplitIcon kind="merge" />} lines={["Scal", "komórki"]} dim />
          <ToolButton width={34} icon={<SplitIcon kind="cells" />} lines={["Podziel", "komórki"]} />
          <ToolButton width={34} icon={<SplitIcon kind="table" />} lines={["Podziel", "tabelę"]} />
        </Group>
        <Group name="Rozmiar komórki" width={290} launcher>
          <ToolButton width={81} icon={<AutoFitIcon />} lines={["Autodopasowanie"]} menu />
          <ToolRule />
          <FieldStack>
            <SizeField>
              <HeightIcon />
              <SizeLabel>Wysokość:</SizeLabel>
              <SizeBox>
                <SizeInput defaultValue="0,3 cm" />
                <Spinner />
              </SizeBox>
            </SizeField>
            <SizeField>
              <WidthIcon />
              <SizeLabel>Szerokość:</SizeLabel>
              <SizeBox>
                <SizeInput defaultValue="2,53 cm" />
                <Spinner />
              </SizeBox>
            </SizeField>
          </FieldStack>
          <ToolRule />
          <FieldStack>
            <RowTool>
              <RowsIcon />
              Rozłóż wiersze
            </RowTool>
            <RowTool>
              <ColumnsIcon />
              Rozłóż kolumny
            </RowTool>
          </FieldStack>
        </Group>
        <Group name="Wyrównanie" width={137}>
          <AlignGrid>
            {range(9).map((i) => (
              <AlignButton key={i} $on={i === 1} aria-label={`Wyrównanie ${i + 1}`}>
                <AlignIcon col={i % 3} row={Math.floor(i / 3)} />
              </AlignButton>
            ))}
          </AlignGrid>
          <ToolButton width={40} icon={<TextDirIcon />} lines={["Kierunek", "tekstu"]} />
          <ToolButton width={42} icon={<MarginsIcon />} lines={["Marginesy", "komórki"]} />
        </Group>
        <Group name="Dane" width={171}>
          <ToolButton width={36} icon={<SortIcon />} lines={["Sortuj"]} />
          <ToolButton width={50} icon={<RepeatIcon />} lines={["Powt.", "wiersze nagł."]} dim />
          <ToolButton width={46} icon={<ConvertIcon />} lines={["Konwertuj", "na tekst"]} />
          <ToolButton width={36} icon={<FxIcon />} lines={["Formuła"]} />
        </Group>
      </Ribbon>

      <Workspace>
        <Corner>
          <TabStop aria-label="Tabulator">
            <TabStopMark>
              <svg width="6" height="6">
                <path d="M1 0V5H6" fill="none" stroke="#222" strokeWidth="2" />
              </svg>
            </TabStopMark>
          </TabStop>
        </Corner>
        <RulerTrack>
          <HorizontalRuler />
        </RulerTrack>
        <span />
        <ScrollColumn>
          <svg width="13" height="34" viewBox="0 0 13 34">
            <path d="M3 1.5H10" stroke="#555" strokeWidth="1.5" />
            <rect x=".5" y="4.5" width="12" height="11" fill="#dfe2e6" stroke="#7b8088" />
            <path d="M3 7H7V9L10 8V12L7 13L6 11L3 10Z" fill="#fff" stroke="#555" strokeWidth=".8" />
            <circle cx="6.5" cy="24" r="4" fill="#e8eaec" stroke="#82868c" />
            <path d="M4.5 20V23M6.5 19V23M8.5 20V23" stroke="#82868c" />
          </svg>
          <svg width="7" height="5">
            <path d="M0 4.5L3.5 .5L7 4.5Z" fill="#444" />
          </svg>
          <ScrollThumb aria-label="Przewiń">
            <svg width="5" height="6">
              <path d="M0 .5H5M0 2.5H5M0 4.5H5" stroke="#858a92" />
            </svg>
          </ScrollThumb>
          <ScrollGap />
          <svg width="9" height="48" viewBox="0 0 9 48">
            <path d="M1 2.5H8L4.5 6.5Z" fill="#444" />
            <path d="M2 18L4.5 15.5L7 18ZM2 15L4.5 12.5L7 15Z" fill="#444" />
            <path d="M2 38.5L4.5 41L7 38.5ZM2 41.5L4.5 44L7 41.5Z" fill="#444" />
            <circle cx="4.5" cy="28.5" r="2" fill="#eee" stroke="#555" />
          </svg>
        </ScrollColumn>
        <SideTrack>
          <SideRuler>
            <VerticalRuler />
          </SideRuler>
        </SideTrack>
        <Page>
          <Sheet>
            <thead>
              <tr>
                <HeadCell as="td" $row />
                {columns.map((c) => (
                  <HeadCell key={c} scope="col">
                    {c}
                  </HeadCell>
                ))}
              </tr>
            </thead>
            <tbody>
              {rows.map((row, r) => (
                <tr key={r}>
                  <HeadCell scope="row" $row>
                    {r + 1}
                  </HeadCell>
                  {row.map((v, c) => (
                    <Cell key={c} $fill={r === 4 && c === 0}>
                      {v}
                    </Cell>
                  ))}
                </tr>
              ))}
            </tbody>
          </Sheet>
          <FormulaDialog />
        </Page>
      </Workspace>

      <StatusBar>
        <StatusItem>Strona: 1 z 1</StatusItem>
        <StatusItem>Wyrazy: 26</StatusItem>
        <StatusItem>
          <svg width="24" height="12" viewBox="0 0 24 12">
            <path d="M1 7L5 5L12 8L7 11Z" fill="#fff" stroke="#5878b5" />
            <path d="M4 4L7 7.5L12.5 .5" fill="none" stroke="#3f68b8" strokeWidth="1.6" />
          </svg>
          Polski
        </StatusItem>
        <StatusGap />
        {[
          "M1.5 1.5H9.5V8.5H1.5ZM3 3.5H8M3 5.5H8M3 7H8",
          "M1 2L5 3V9L1 8ZM9 2L5 3V9L9 8Z",
          "M1.5 1.5H7.5V7.5H1.5ZM3 3.5H6M3 5.5H5M6 8.5H10V5",
          "M2 2.5H7M4 4.5H8.5M4 6.5H8.5M2 8.5H7",
          "M1.5 2H9.5M1.5 4H9.5M1.5 6H9.5M1.5 8H9.5",
        ].map((d, i) => (
          <ViewButton key={d} $on={i === 0} aria-label={`Widok ${i + 1}`}>
            <svg width="11" height="10">
              <path d={d} fill={i < 3 ? "#f5f7f9" : "none"} stroke={i < 3 ? "#667388" : "#8e9196"} />
            </svg>
          </ViewButton>
        ))}
        <Zoom>
          <ZoomValue>160%</ZoomValue>
          <IconButton aria-label="Pomniejsz">
            <svg width="12" height="12">
              <circle cx="6" cy="6" r="5" fill="#f4f5f6" stroke="#63676d" />
              <path d="M3.5 6H8.5" stroke="#444" strokeWidth="1.3" />
            </svg>
          </IconButton>
          <ZoomRange type="range" min={0} max={100} defaultValue={58} aria-label="Powiększenie" />
          <IconButton aria-label="Powiększ">
            <svg width="12" height="12">
              <circle cx="6" cy="6" r="5" fill="#f4f5f6" stroke="#63676d" />
              <path d="M3.5 6H8.5M6 3.5V8.5" stroke="#444" strokeWidth="1.3" />
            </svg>
          </IconButton>
        </Zoom>
      </StatusBar>

      <Taskbar>
        <TaskItem aria-label="Start">
          <svg width="13" height="13" viewBox="0 0 13 13">
            <path d="M0 2L5.5 1.2V6H0ZM6.3 1L13 0V6H6.3ZM0 6.8H5.5V11.7L0 11ZM6.3 6.8H13V13L6.3 11.9Z" fill="#fff" />
          </svg>
        </TaskItem>
        <TaskItem aria-label="Wyszukaj">
          <svg width="13" height="13" viewBox="0 0 13 13">
            <circle cx="8" cy="4.8" r="4" {...stroke} />
            <path d="M5.2 7.6L.8 12.2" {...stroke} />
          </svg>
        </TaskItem>
        <TaskItem aria-label="Widok zadań">
          <svg width="15" height="12" viewBox="0 0 15 12">
            <path d="M3.5 .5H11.5V11.5H3.5ZM2 2.5H.5V9.5H2M13 2.5H14.5V9.5H13" {...stroke} />
          </svg>
        </TaskItem>
        <TaskApps>
          {apps.map((a) => (
            <TaskItem key={a.name} aria-label={a.name} $running={a.running} $on={a.on}>
              {a.icon}
            </TaskItem>
          ))}
        </TaskApps>
        <Tray>
          {trayIcons.map(([name, icon]) => (
            <IconButton key={name} aria-label={name}>
              <svg width="13" height="13" viewBox="0 0 13 13">
                {icon}
              </svg>
            </IconButton>
          ))}
          <TrayClock>
            <TrayText>
              POL
              <br />
              PLP
            </TrayText>
            <TrayText>
              21:50
              <br />
              2016-10-25
            </TrayText>
          </TrayClock>
          <IconButton aria-label="Centrum akcji">
            <svg width="13" height="13" viewBox="0 0 13 13">
              <path d="M.5 .5H12.5V9.5H9L7 12L5 9.5H.5Z" {...stroke} />
            </svg>
          </IconButton>
        </Tray>
      </Taskbar>
    </Shell>
  );
}
